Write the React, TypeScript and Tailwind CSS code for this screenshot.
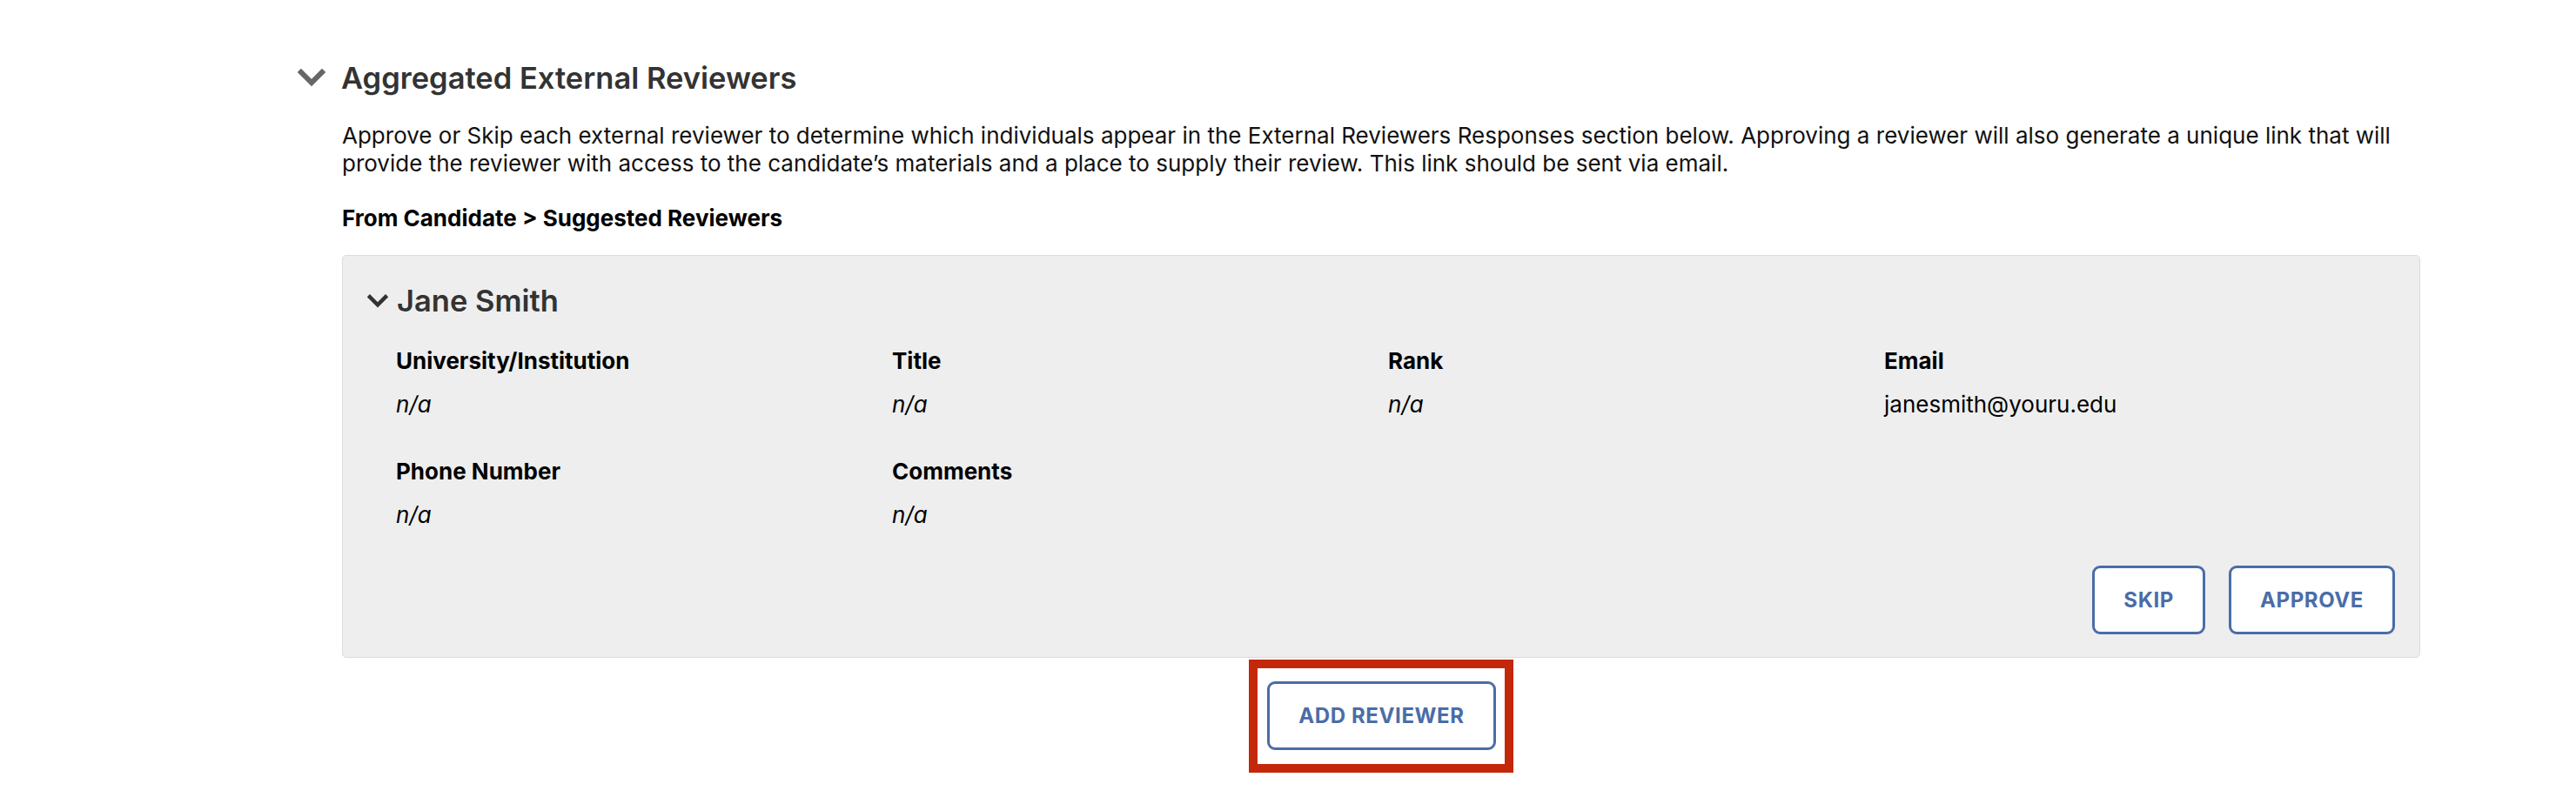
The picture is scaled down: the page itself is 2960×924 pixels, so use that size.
import React from "react"

const fields = [
    { label: "University/Institution", value: "n/a", italic: true },
    { label: "Title", value: "n/a", italic: true },
    { label: "Rank", value: "n/a", italic: true },
    { label: "Email", value: "janesmith@youru.edu", italic: false },
    { label: "Phone Number", value: "n/a", italic: true },
    { label: "Comments", value: "n/a", italic: true },
]

function Chevron({ className, stroke }: { className: string; stroke: number }) {
    return (
        <svg viewBox="0 0 32 22" className={className} fill="none">
            <polyline points="4,4 16,16 28,4" stroke="currentColor" strokeWidth={stroke} strokeLinecap="square" strokeLinejoin="miter" />
        </svg>
    )
}

function OutlineButton({ children }: { children: React.ReactNode }) {
    return (
        <button className="h-[79px] px-[33px] flex items-center justify-center bg-white border-[3px] border-[#4a6da8] rounded-[9px] text-[#4a6da8] text-[24px] font-bold uppercase tracking-[0.6px] leading-[32px]">
            {children}
        </button>
    )
}

export default function App() {
    return (
        <div className="min-h-screen bg-white pt-[70px] pl-[342px] text-black" style={{ fontFamily: "Inter, 'Noto Sans', sans-serif" }}>
            <div className="flex items-center">
                <Chevron className="w-[32px] h-[22px] text-[#666666] mr-[18px]" stroke={6} />
                <h2 className="text-[34.5px] leading-[40px] font-semibold text-[#333333]">Aggregated External Reviewers</h2>
            </div>

            <div className="ml-[51px] w-[2388px]">
                <p className="mt-[30px] text-[26px] leading-[32px] text-[#111111]">
                    Approve or Skip each external reviewer to determine which individuals appear in the External Reviewers Responses section below. Approving a reviewer will also generate a unique link that will provide the reviewer with access to the candidate’s materials and a place to supply their review. This link should be sent via email.
                </p>
                <h4 className="mt-[31px] text-[26px] leading-[32px] font-bold">From Candidate &gt; Suggested Reviewers</h4>

                <div className="mt-[26px] bg-[#eeeeee] border border-[#dcdcdc] rounded-[5px] pt-[32px] pl-[28px] pr-[28px] pb-[26px]">
                    <div className="flex items-center">
                        <Chevron className="w-[24px] h-[17px] text-[#333333] mr-[10px]" stroke={6} />
                        <h3 className="text-[34.5px] leading-[40px] font-semibold text-[#333333]">Jane Smith</h3>
                    </div>

                    <div className="ml-[33px] mt-[33px] grid grid-cols-[repeat(4,570px)] gap-y-[45px]">
                        {fields.map((f) => (
                            <div key={f.label}>
                                <div className="text-[26px] leading-[32px] font-bold">{f.label}</div>
                                <div className={`mt-[18px] text-[26px] leading-[32px] ${f.italic ? "italic" : ""}`}>{f.value}</div>
                            </div>
                        ))}
                    </div>

                    <div className="mt-[42px] flex justify-end gap-[27px]">
                        <OutlineButton>Skip</OutlineButton>
                        <OutlineButton>Approve</OutlineButton>
                    </div>
                </div>

                <div className="mt-[2px] mx-auto w-fit border-[10px] border-[#c3280a] pt-[15px] pb-[16px] pl-[11px] pr-[10px]">
                    <OutlineButton>Add Reviewer</OutlineButton>
                </div>
            </div>
        </div>
    )
}
